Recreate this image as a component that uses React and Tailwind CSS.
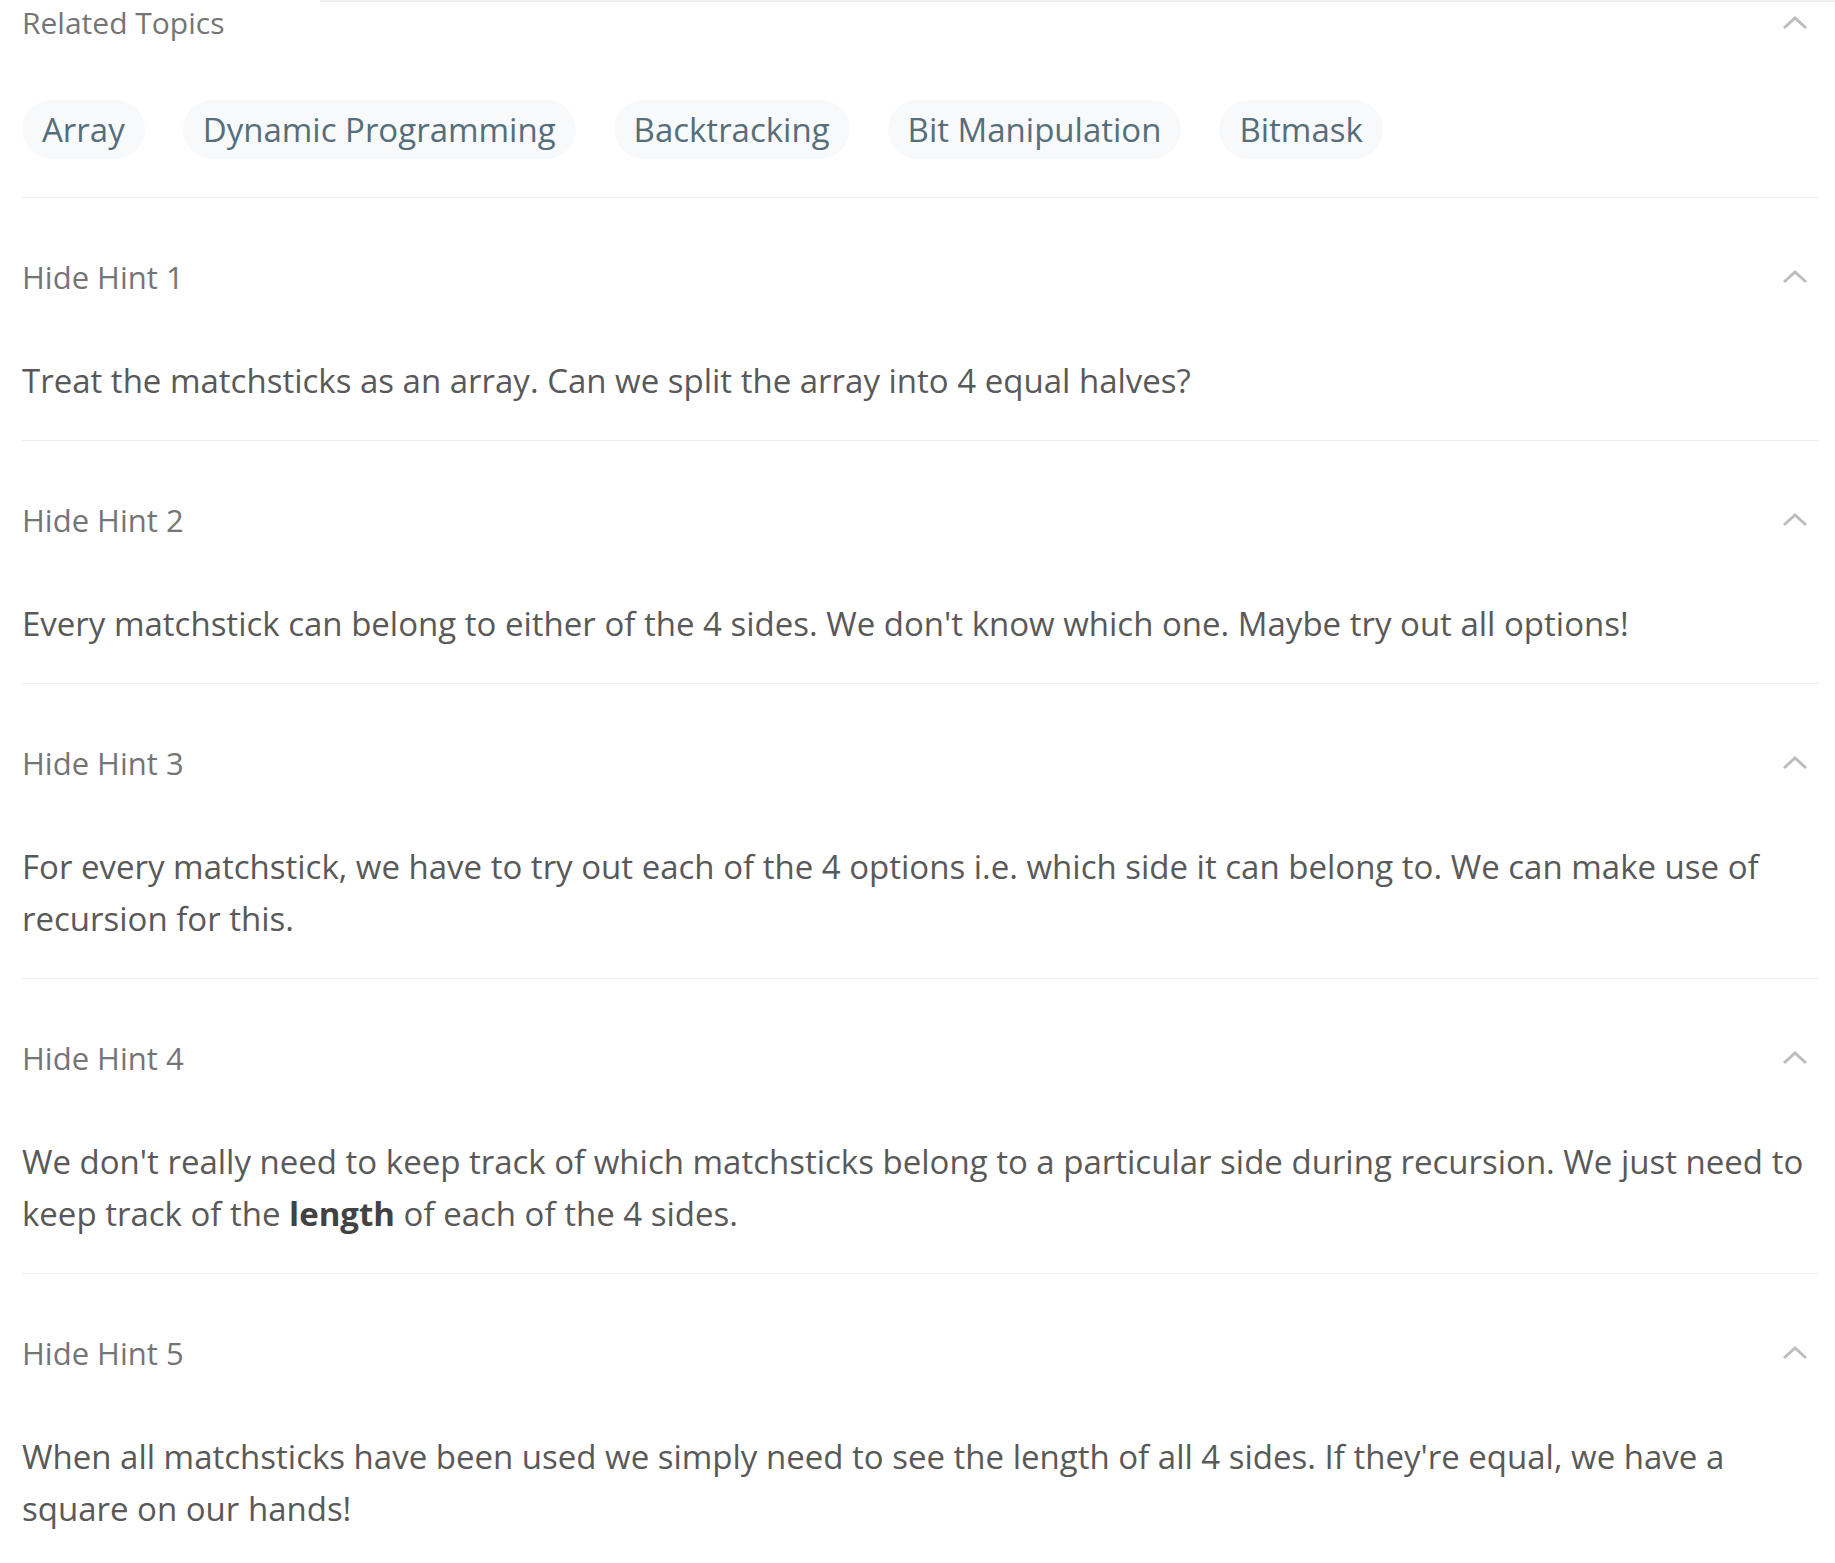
const topics = ["Array", "Dynamic Programming", "Backtracking", "Bit Manipulation", "Bitmask"];

const hints = [
  <>Treat the matchsticks as an array. Can we split the array into 4 equal halves?</>,
  <>Every matchstick can belong to either of the 4 sides. We don't know which one. Maybe try out all options!</>,
  <>For every matchstick, we have to try out each of the 4 options i.e. which side it can belong to. We can make use of recursion for this.</>,
  <>
    We don't really need to keep track of which matchsticks belong to a particular side during recursion. We just need to keep track of the{" "}
    <b className="font-bold text-[#424242]">length</b> of each of the 4 sides.
  </>,
  <>When all matchsticks have been used we simply need to see the length of all 4 sides. If they're equal, we have a square on our hands!</>,
];

const Chevron = () => (
  <svg width="26" height="16" viewBox="0 0 26 16" className="shrink-0">
    <path d="M2 13 L13 3 L24 13" fill="none" stroke="#bdbdbd" strokeWidth="3" />
  </svg>
);

export default function App() {
  return (
    <div className="min-h-screen bg-white font-['Open_Sans',sans-serif]">
      <div className="ml-[320px] h-[2px] bg-[#eeeeee]" />
      <div className="pl-[22px] pr-[16px]">
        {/* related topics */}
        <div className="border-b border-[#eeeeee] pb-[38px]">
          <div className="flex items-center justify-between pr-[11px]">
            <span className="text-[30px] leading-[42px] text-[#757575]">Related Topics</span>
            <Chevron />
          </div>
          <div className="mt-[56px] flex gap-[38px]">
            {topics.map((t) => (
              <span
                key={t}
                className="h-[59px] rounded-full bg-[#f8f9fa] px-[20px] text-[33px] leading-[59px] text-[#546e7a]"
              >
                {t}
              </span>
            ))}
          </div>
        </div>

        {/* hints */}
        {hints.map((h, i) => (
          <div key={i} className="border-b border-[#eeeeee] pb-[33px]">
            <div className="flex items-center justify-between pt-[58px] pr-[11px]">
              <span className="text-[31px] leading-[42px] text-[#757575]">Hide Hint {i + 1}</span>
              <Chevron />
            </div>
            <p className="pt-[57px] text-[33px] leading-[52px] text-[#595959]">{h}</p>
          </div>
        ))}
      </div>
    </div>
  );
}
